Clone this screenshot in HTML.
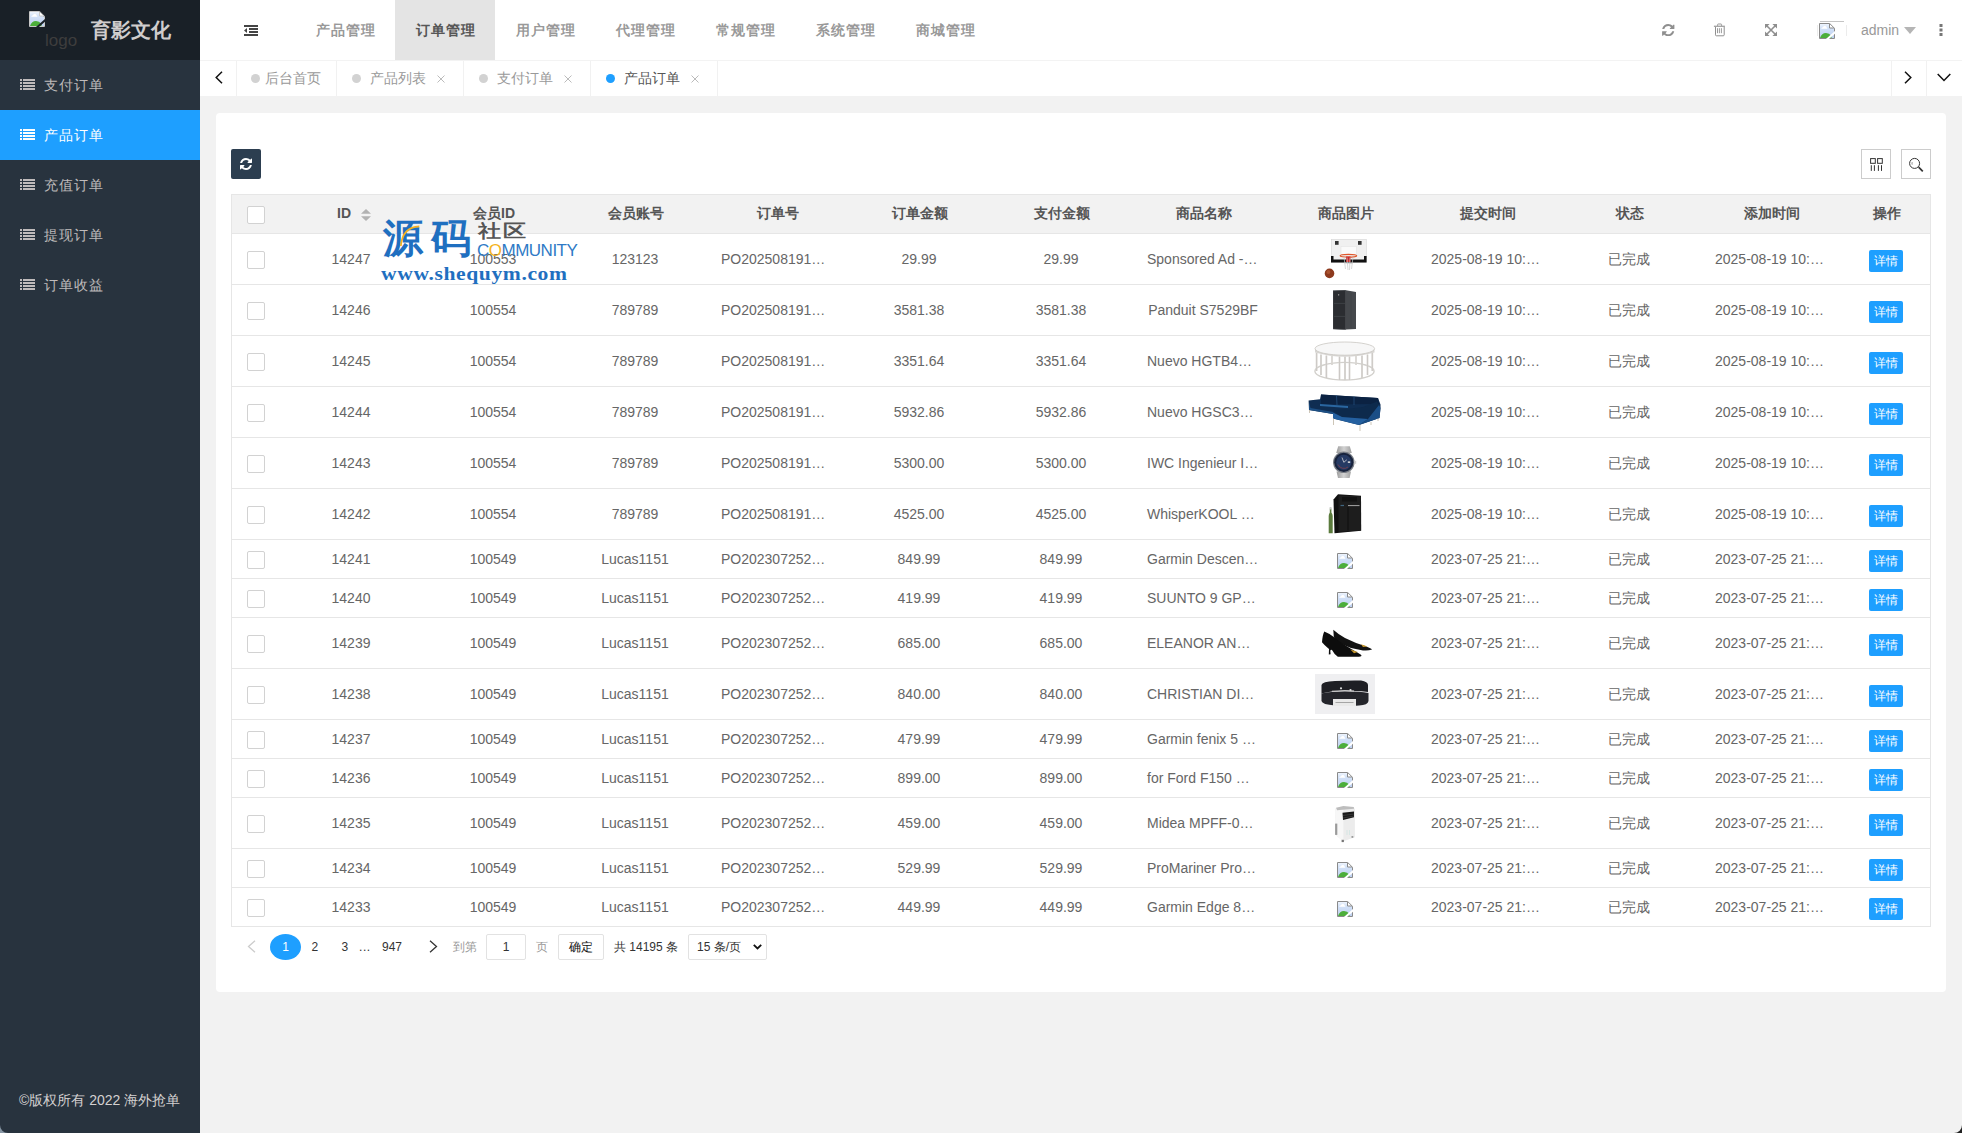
<!DOCTYPE html><html><head><meta charset="utf-8"><style>
*{margin:0;padding:0;box-sizing:border-box}
html,body{width:1962px;height:1133px;overflow:hidden;background:#f2f2f2;font-family:"Liberation Sans",sans-serif;font-size:14px;color:#666}
.a{position:absolute}
#side{left:0;top:0;width:200px;height:1133px;background:#28333e}
#logo{left:0;top:0;width:200px;height:60px;background:#192027}
.mi{left:0;width:200px;height:50px;color:rgb(191,187,187);font-size:14px;line-height:50px}
.mi .ic{position:absolute;left:20px;top:19px;width:15px;height:11px}
.mi span{position:absolute;left:44px;top:0;letter-spacing:1px}
.mi.on{background:#1e9fff;color:#fff}
#hdr{left:200px;top:0;width:1762px;height:60px;background:#fff}
.nv{top:0;width:100px;height:60px;line-height:60px;text-align:center;font-weight:bold;letter-spacing:1px;text-indent:1px;color:rgba(107,107,107,.7);font-size:14px}
.nv.on{background:#e4e4e4;color:#565656}
#tabs{left:200px;top:61px;width:1762px;height:35px;background:#fff}
.tb{top:61px;height:35px;border-right:1px solid #f1f1f1;color:#999;font-size:14px;line-height:35px}
.dot{position:absolute;width:9px;height:9px;border-radius:50%;background:#d2d2d2;top:13px}
.cls{position:absolute;top:14px;width:8px;height:8px}
#card{left:216px;top:113px;width:1730px;height:879px;background:#fff;border-radius:4px}
.th{top:194px;height:38px;line-height:38px;text-align:center;font-weight:bold;color:#555}
.cell{height:20px;line-height:20px;padding:0 15px;white-space:nowrap;overflow:hidden;text-overflow:ellipsis;text-align:center;color:#666}
.cb{position:absolute;left:247px;width:18px;height:18px;border:1px solid #d2d2d2;border-radius:2px;background:#fff}
.hl{left:231px;width:1700px;height:1px;background:#e6e6e6}
.btn{position:absolute;left:1869px;width:34px;height:22px;background:#1e9fff;border-radius:2px;color:#fff;font-size:12px;line-height:22px;text-align:center}
.pg{top:934px;height:26px;line-height:26px;font-size:12px;color:#333}
</style></head><body>
<div id="side" class="a"></div><div id="logo" class="a"></div>
<div class="a" style="left:29px;top:11px"><svg width="16" height="16" viewBox="0 0 16 16"><defs><linearGradient id="sky" x1="0" y1="0" x2="0" y2="1"><stop offset="0" stop-color="#eef4fd"/><stop offset="0.3" stop-color="#d3e2f8"/><stop offset="1" stop-color="#bed0f0"/></linearGradient></defs><path d="M1 1H10.5L15 5.5V15H1z" fill="url(#sky)"/><path d="M2.2 5.8Q2.4 4.3 3.9 4.2Q4.6 2.7 6.2 3Q7.5 3.3 7.6 4.6Q8.4 4.8 8.4 5.8z" fill="#fff"/><path d="M1 15Q2.8 9.8 7 9.9Q10.2 10 12.5 13V15z" fill="#4cae3a"/><path d="M10.5 1V5H15z" fill="#fff"/><path d="M0.5 15.5V0.5H10.7L15.5 5.3V15.5H0.5" fill="none" stroke="#c8c8c8" stroke-width="1"/><path d="M10.5 0.8V5H15.2" fill="none" stroke="#c8c8c8" stroke-width="1"/><path d="M7.4 16.9L16.6 8.8" stroke="#192027" stroke-width="2"/></svg></div>
<div class="a" style="left:45px;top:31px;font-size:17px;line-height:20px;color:#3e3d3d">logo</div>
<div class="a" style="left:91px;top:17px;font-size:20px;line-height:26px;font-weight:bold;color:#d0cdcd">育影文化</div>
<div class="a mi" style="top:60px"><svg class="ic" width="15" height="11" viewBox="0 0 15 11"><rect x="0" y="0" width="2" height="2" fill="currentColor"/><rect x="3" y="0" width="12" height="2" fill="currentColor"/><rect x="0" y="3" width="2" height="2" fill="currentColor"/><rect x="3" y="3" width="12" height="2" fill="currentColor"/><rect x="0" y="6" width="2" height="2" fill="currentColor"/><rect x="3" y="6" width="12" height="2" fill="currentColor"/><rect x="0" y="9" width="2" height="2" fill="currentColor"/><rect x="3" y="9" width="12" height="2" fill="currentColor"/></svg><span>支付订单</span></div>
<div class="a mi on" style="top:110px"><svg class="ic" width="15" height="11" viewBox="0 0 15 11"><rect x="0" y="0" width="2" height="2" fill="currentColor"/><rect x="3" y="0" width="12" height="2" fill="currentColor"/><rect x="0" y="3" width="2" height="2" fill="currentColor"/><rect x="3" y="3" width="12" height="2" fill="currentColor"/><rect x="0" y="6" width="2" height="2" fill="currentColor"/><rect x="3" y="6" width="12" height="2" fill="currentColor"/><rect x="0" y="9" width="2" height="2" fill="currentColor"/><rect x="3" y="9" width="12" height="2" fill="currentColor"/></svg><span>产品订单</span></div>
<div class="a mi" style="top:160px"><svg class="ic" width="15" height="11" viewBox="0 0 15 11"><rect x="0" y="0" width="2" height="2" fill="currentColor"/><rect x="3" y="0" width="12" height="2" fill="currentColor"/><rect x="0" y="3" width="2" height="2" fill="currentColor"/><rect x="3" y="3" width="12" height="2" fill="currentColor"/><rect x="0" y="6" width="2" height="2" fill="currentColor"/><rect x="3" y="6" width="12" height="2" fill="currentColor"/><rect x="0" y="9" width="2" height="2" fill="currentColor"/><rect x="3" y="9" width="12" height="2" fill="currentColor"/></svg><span>充值订单</span></div>
<div class="a mi" style="top:210px"><svg class="ic" width="15" height="11" viewBox="0 0 15 11"><rect x="0" y="0" width="2" height="2" fill="currentColor"/><rect x="3" y="0" width="12" height="2" fill="currentColor"/><rect x="0" y="3" width="2" height="2" fill="currentColor"/><rect x="3" y="3" width="12" height="2" fill="currentColor"/><rect x="0" y="6" width="2" height="2" fill="currentColor"/><rect x="3" y="6" width="12" height="2" fill="currentColor"/><rect x="0" y="9" width="2" height="2" fill="currentColor"/><rect x="3" y="9" width="12" height="2" fill="currentColor"/></svg><span>提现订单</span></div>
<div class="a mi" style="top:260px"><svg class="ic" width="15" height="11" viewBox="0 0 15 11"><rect x="0" y="0" width="2" height="2" fill="currentColor"/><rect x="3" y="0" width="12" height="2" fill="currentColor"/><rect x="0" y="3" width="2" height="2" fill="currentColor"/><rect x="3" y="3" width="12" height="2" fill="currentColor"/><rect x="0" y="6" width="2" height="2" fill="currentColor"/><rect x="3" y="6" width="12" height="2" fill="currentColor"/><rect x="0" y="9" width="2" height="2" fill="currentColor"/><rect x="3" y="9" width="12" height="2" fill="currentColor"/></svg><span>订单收益</span></div>
<div class="a" style="left:19px;top:1090px;font-size:14px;line-height:20px;color:#d4d1d1">©版权所有 2022 海外抢单</div>
<div id="hdr" class="a"></div><div class="a" style="left:200px;top:60px;width:1762px;height:1px;background:#f3f3f3"></div>
<svg class="a" style="left:244px;top:25px" width="14" height="11" viewBox="0 0 14 11"><rect x="0" y="0" width="14" height="2" fill="#444"/><rect x="5" y="3" width="9" height="2" fill="#444"/><rect x="5" y="6" width="9" height="2" fill="#444"/><rect x="0" y="9" width="14" height="2" fill="#444"/><path d="M0 5.5l3-2.5v5z" fill="#444"/></svg>
<div class="a nv" style="left:295px">产品管理</div>
<div class="a nv on" style="left:395px">订单管理</div>
<div class="a nv" style="left:495px">用户管理</div>
<div class="a nv" style="left:595px">代理管理</div>
<div class="a nv" style="left:695px">常规管理</div>
<div class="a nv" style="left:795px">系统管理</div>
<div class="a nv" style="left:895px">商城管理</div>
<svg class="a" style="left:1662px;top:23.8px" width="12.5" height="12.3" viewBox="0 0 1536 1536"><path d="M1511 928q0 5-1 7-64 268-268 434.5T764 1536q-146 0-282.5-55T238 1324l-129 129q-19 19-45 19t-45-19-19-45V960q0-26 19-45t45-19h448q26 0 45 19t19 45-19 45l-137 137q71 66 161 102t187 36q134 0 250-65t186-179q11-17 53-117 8-23 30-23h192q13 0 22.5 9.5t9.5 22.5zm25-800v448q0 26-19 45t-45 19h-448q-26 0-45-19t-19-45 19-45l138-138Q969 256 768 256q-134 0-250 65T332 500q-11 17-53 117-8 23-30 23H50q-13 0-22.5-9.5T18 608v-7q65-268 270-434.5T768 0q146 0 284 55.5T1297 212l130-129q19-19 45-19t45 19 19 45z" fill="#8f8f8f"/></svg>
<svg class="a" style="left:1713px;top:23px" width="13" height="14" viewBox="0 0 13 14"><rect x="0.9" y="2.7" width="11" height="1.1" fill="#8f8f8f"/><path d="M4.6 2.9V1.6Q4.6 1 5.2 1H8Q8.6 1 8.6 1.6V2.9" fill="none" stroke="#8f8f8f" stroke-width="0.9"/><path d="M2.5 3.8V11.8Q2.5 12.8 3.5 12.8H10.2Q11.2 12.8 11.2 11.8V3.8" fill="none" stroke="#8f8f8f" stroke-width="1"/><path d="M4.5 5.2V10.2M6.4 5.2V10.2M8.4 5.2V10.2" stroke="#8f8f8f" stroke-width="0.9"/></svg>
<svg class="a" style="left:1765px;top:24px" width="12" height="12" viewBox="0 0 12 12"><path d="M0 0h4.6L0 4.6zM12 0v4.6L7.4 0zM0 12V7.4L4.6 12zM12 12H7.4L12 7.4z" fill="#8f8f8f"/><path d="M1.5 1.5l9 9M10.5 1.5l-9 9" stroke="#8f8f8f" stroke-width="1.6"/></svg>
<div class="a" style="left:1820px;top:21px;width:24px;height:1px;background:#c4c4c4"></div><div class="a" style="left:1817px;top:25px;width:1px;height:11px;background:#ececec"></div><div class="a" style="left:1846px;top:25px;width:1px;height:11px;background:#ececec"></div>
<div class="a" style="left:1819px;top:23px"><svg width="16" height="16" viewBox="0 0 16 16"><defs><linearGradient id="sky" x1="0" y1="0" x2="0" y2="1"><stop offset="0" stop-color="#eef4fd"/><stop offset="0.3" stop-color="#d3e2f8"/><stop offset="1" stop-color="#bed0f0"/></linearGradient></defs><path d="M1 1H10.5L15 5.5V15H1z" fill="url(#sky)"/><path d="M2.2 5.8Q2.4 4.3 3.9 4.2Q4.6 2.7 6.2 3Q7.5 3.3 7.6 4.6Q8.4 4.8 8.4 5.8z" fill="#fff"/><path d="M1 15Q2.8 9.8 7 9.9Q10.2 10 12.5 13V15z" fill="#4cae3a"/><path d="M10.5 1V5H15z" fill="#fff"/><path d="M0.5 15.5V0.5H10.7L15.5 5.3V15.5H0.5" fill="none" stroke="#8a8a8a" stroke-width="1"/><path d="M10.5 0.8V5H15.2" fill="none" stroke="#8a8a8a" stroke-width="1"/><path d="M7.4 16.9L16.6 8.8" stroke="#fff" stroke-width="2"/></svg></div>
<div class="a" style="left:1861px;top:20px;font-size:14px;line-height:20px;color:#999">admin</div>
<svg class="a" style="left:1904px;top:27px" width="12" height="7" viewBox="0 0 12 7"><path d="M0 0h12l-6 7z" fill="#b5b5b5"/></svg>
<svg class="a" style="left:1939px;top:24px" width="4" height="12" viewBox="0 0 4 12"><rect x="0.5" y="0" width="3" height="3" fill="#777"/><rect x="0.5" y="4.5" width="3" height="3" fill="#777"/><rect x="0.5" y="9" width="3" height="3" fill="#777"/></svg>
<div id="tabs" class="a"></div>
<div class="a" style="left:236px;top:61px;width:1px;height:35px;background:#f1f1f1"></div>
<svg class="a" style="left:215px;top:71px" width="8" height="13" viewBox="0 0 8 13"><path d="M7 0.7L1.2 6.5 7 12.3" fill="none" stroke="#111" stroke-width="1.5"/></svg>
<div class="a tb" style="left:237px;width:100px"><div class="dot" style="left:14px;top:13px"></div><span style="position:absolute;left:28px">后台首页</span></div>
<div class="a tb" style="left:337px;width:127px;"><div class="dot" style="left:15px;"></div><span style="position:absolute;left:33px">产品列表</span><svg class="cls" style="left:100px" viewBox="0 0 8 8"><path d="M0.5 0.5l7 7M7.5 0.5l-7 7" stroke="#bbb" stroke-width="1"/></svg></div>
<div class="a tb" style="left:464px;width:127px;"><div class="dot" style="left:15px;"></div><span style="position:absolute;left:33px">支付订单</span><svg class="cls" style="left:100px" viewBox="0 0 8 8"><path d="M0.5 0.5l7 7M7.5 0.5l-7 7" stroke="#bbb" stroke-width="1"/></svg></div>
<div class="a tb" style="left:591px;width:127px;color:#555"><div class="dot" style="left:15px;background:#1e9fff"></div><span style="position:absolute;left:33px">产品订单</span><svg class="cls" style="left:100px" viewBox="0 0 8 8"><path d="M0.5 0.5l7 7M7.5 0.5l-7 7" stroke="#bbb" stroke-width="1"/></svg></div>
<div class="a" style="left:1891px;top:61px;width:1px;height:35px;background:#f1f1f1"></div>
<div class="a" style="left:1926px;top:61px;width:1px;height:35px;background:#f1f1f1"></div>
<svg class="a" style="left:1904px;top:71px" width="8" height="13" viewBox="0 0 8 13"><path d="M1 0.7L6.8 6.5 1 12.3" fill="none" stroke="#111" stroke-width="1.5"/></svg>
<svg class="a" style="left:1937px;top:73px" width="14" height="9" viewBox="0 0 14 9"><path d="M0.7 1l6.3 6.5L13.3 1" fill="none" stroke="#111" stroke-width="1.5"/></svg>
<div id="card" class="a"></div>
<div class="a" style="left:231px;top:149px;width:30px;height:30px;background:#2c3e50;border-radius:2px"></div>
<svg class="a" style="left:240px;top:158px" width="12" height="12" viewBox="0 0 1536 1536"><path d="M1511 928q0 5-1 7-64 268-268 434.5T764 1536q-146 0-282.5-55T238 1324l-129 129q-19 19-45 19t-45-19-19-45V960q0-26 19-45t45-19h448q26 0 45 19t19 45-19 45l-137 137q71 66 161 102t187 36q134 0 250-65t186-179q11-17 53-117 8-23 30-23h192q13 0 22.5 9.5t9.5 22.5zm25-800v448q0 26-19 45t-45 19h-448q-26 0-45-19t-19-45 19-45l138-138Q969 256 768 256q-134 0-250 65T332 500q-11 17-53 117-8 23-30 23H50q-13 0-22.5-9.5T18 608v-7q65-268 270-434.5T768 0q146 0 284 55.5T1297 212l130-129q19-19 45-19t45 19 19 45z" fill="#fff"/></svg>
<div class="a" style="left:1861px;top:149px;width:30px;height:30px;border:1px solid #ccc"></div>
<svg class="a" style="left:1869px;top:157px" width="16" height="16" viewBox="0 0 16 16"><rect x="1.6" y="1.6" width="4.7" height="4.7" fill="none" stroke="#333" stroke-width="1"/><rect x="8.6" y="1.6" width="4.7" height="4.7" fill="none" stroke="#333" stroke-width="1"/><path d="M2.3 8.2V13.9M5.4 8.2V13.9M9.4 8.2V13.9M12.5 8.2V13.9" stroke="#333" stroke-width="1"/></svg>
<div class="a" style="left:1901px;top:149px;width:30px;height:30px;border:1px solid #ccc"></div>
<svg class="a" style="left:1909px;top:157px" width="16" height="16" viewBox="0 0 16 16"><circle cx="5.6" cy="6.4" r="5" fill="none" stroke="#333" stroke-width="1"/><path d="M3.2 5.2Q2.8 6.3 3.2 7.6" fill="none" stroke="#555" stroke-width="0.7"/><path d="M9.6 10.2L13.8 14.4" stroke="#333" stroke-width="1.7"/></svg>
<div class="a" style="left:231px;top:194px;width:1700px;height:733px;border:1px solid #e6e6e6"></div>
<div class="a" style="left:232px;top:195px;width:1698px;height:38px;background:#f2f2f2"></div>
<div class="a hl" style="top:233px"></div>
<div class="cb" style="top:206px"></div>
<div class="a th" style="left:337px;width:20px;text-align:left">ID</div><svg class="a" style="left:361px;top:209px" width="10" height="12" viewBox="0 0 10 12"><path d="M5 0L10 4.8H0z" fill="#b2b2b2"/><path d="M0 7.2H10L5 12z" fill="#b2b2b2"/></svg>
<div class="a th" style="left:423px;width:142px">会员ID</div>
<div class="a th" style="left:565px;width:142px">会员账号</div>
<div class="a th" style="left:707px;width:142px">订单号</div>
<div class="a th" style="left:849px;width:142px">订单金额</div>
<div class="a th" style="left:991px;width:142px">支付金额</div>
<div class="a th" style="left:1133px;width:142px">商品名称</div>
<div class="a th" style="left:1275px;width:142px">商品图片</div>
<div class="a th" style="left:1417px;width:142px">提交时间</div>
<div class="a th" style="left:1559px;width:142px">状态</div>
<div class="a th" style="left:1701px;width:142px">添加时间</div>
<div class="a th" style="left:1843px;width:88px">操作</div>
<div class="cb" style="top:251px"></div>
<div class="a cell" style="left:280px;top:249px;width:142px">14247</div>
<div class="a cell" style="left:422px;top:249px;width:142px">100553</div>
<div class="a cell" style="left:564px;top:249px;width:142px">123123</div>
<div class="a cell" style="left:706px;top:249px;width:142px">PO2025081910234567</div>
<div class="a cell" style="left:848px;top:249px;width:142px">29.99</div>
<div class="a cell" style="left:990px;top:249px;width:142px">29.99</div>
<div class="a cell" style="left:1132px;top:249px;width:142px">Sponsored Ad - Mini Hoop</div>
<div class="a cell" style="left:1416px;top:249px;width:142px">2025-08-19 10:23:11</div>
<div class="a cell" style="left:1558px;top:249px;width:142px">已完成</div>
<div class="a cell" style="left:1700px;top:249px;width:142px">2025-08-19 10:23:11</div>
<div class="btn" style="top:250px">详情</div>
<div class="a" style="left:1323px;top:239px;height:40px"><svg width="44" height="40" viewBox="0 0 44 40"><rect x="8.3" y="0.3" width="35" height="23" fill="#f0f0f0" stroke="#d6d6d6" stroke-width="0.6"/><rect x="12" y="2" width="3.6" height="3.8" fill="#333"/><rect x="35" y="2" width="3.6" height="3.8" fill="#333"/><path d="M8 17H10.5V20.5H41V17H43.6V23.4H8z" fill="#111"/><rect x="18" y="7.6" width="15.3" height="9" fill="#fafafa" stroke="#e2e2e2" stroke-width="0.5"/><ellipse cx="25.4" cy="16.7" rx="8.3" ry="1.4" fill="none" stroke="#e0562a" stroke-width="1.2"/><rect x="23" y="17.5" width="4.5" height="5.5" fill="#cc2a2a"/><path d="M21 18L22.5 30M24 18.5L25 31M27 18.5L26.5 31M30 18L28.5 30M21.5 24L29.5 24.5" stroke="#c8c8c8" stroke-width="0.7" fill="none"/><circle cx="6.5" cy="34.4" r="4.8" fill="#8d3a1e"/><circle cx="5.4" cy="33" r="2" fill="#a9522f"/></svg></div>
<div class="a hl" style="top:284px"></div>
<div class="cb" style="top:302px"></div>
<div class="a cell" style="left:280px;top:300px;width:142px">14246</div>
<div class="a cell" style="left:422px;top:300px;width:142px">100554</div>
<div class="a cell" style="left:564px;top:300px;width:142px">789789</div>
<div class="a cell" style="left:706px;top:300px;width:142px">PO2025081910234568</div>
<div class="a cell" style="left:848px;top:300px;width:142px">3581.38</div>
<div class="a cell" style="left:990px;top:300px;width:142px">3581.38</div>
<div class="a cell" style="left:1132px;top:300px;width:142px">Panduit S7529BF</div>
<div class="a cell" style="left:1416px;top:300px;width:142px">2025-08-19 10:23:11</div>
<div class="a cell" style="left:1558px;top:300px;width:142px">已完成</div>
<div class="a cell" style="left:1700px;top:300px;width:142px">2025-08-19 10:23:11</div>
<div class="btn" style="top:301px">详情</div>
<div class="a" style="left:1333px;top:290px;height:40px"><svg width="24" height="40" viewBox="0 0 24 40"><path d="M0 0.8L13 0.3L23 2V39L13 39.6L0 39z" fill="#45484c"/><path d="M0 0.8L12.6 0.3V39.6L0 39z" fill="#2b2d31" stroke="#55585c" stroke-width="0.5"/><path d="M1 13.4H12M1 26.4H12" stroke="#4a4d52" stroke-width="0.6"/><rect x="5" y="4" width="1.2" height="1.6" fill="#888"/><path d="M18 2.5V38.5" stroke="#3a3d41" stroke-width="0.5"/></svg></div>
<div class="a hl" style="top:335px"></div>
<div class="cb" style="top:353px"></div>
<div class="a cell" style="left:280px;top:351px;width:142px">14245</div>
<div class="a cell" style="left:422px;top:351px;width:142px">100554</div>
<div class="a cell" style="left:564px;top:351px;width:142px">789789</div>
<div class="a cell" style="left:706px;top:351px;width:142px">PO2025081910234569</div>
<div class="a cell" style="left:848px;top:351px;width:142px">3351.64</div>
<div class="a cell" style="left:990px;top:351px;width:142px">3351.64</div>
<div class="a cell" style="left:1132px;top:351px;width:142px">Nuevo HGTB4XXXXX</div>
<div class="a cell" style="left:1416px;top:351px;width:142px">2025-08-19 10:23:11</div>
<div class="a cell" style="left:1558px;top:351px;width:142px">已完成</div>
<div class="a cell" style="left:1700px;top:351px;width:142px">2025-08-19 10:23:11</div>
<div class="btn" style="top:352px">详情</div>
<div class="a" style="left:1314px;top:341px;height:40px"><svg width="62" height="40" viewBox="0 0 62 40"><ellipse cx="30.5" cy="30.2" rx="29.6" ry="8.8" fill="none" stroke="#d2d0cc" stroke-width="1.4"/><path d="M2.6 12V30M7 13.5V34M12.4 14.5V37M25.5 15.5V39M31 15.5V39M35.5 15.5V39M48 14.5V37M53.5 13.5V34M58.3 12V30M18 15V24M42 15V24" stroke="#d9d6d2" stroke-width="1.8"/><path d="M2.6 12V30M7 13.5V34M12.4 14.5V37M25.5 15.5V39M31 15.5V39M35.5 15.5V39M48 14.5V37M53.5 13.5V34M58.3 12V30" stroke="#b9b6b2" stroke-width="0.4"/><path d="M1 8V11.5Q30.5 20 60.5 11.5V8z" fill="#d8d6d3"/><ellipse cx="30.8" cy="7.6" rx="29.8" ry="6.6" fill="#f7f7f7" stroke="#c9c6c2" stroke-width="0.8"/></svg></div>
<div class="a hl" style="top:386px"></div>
<div class="cb" style="top:404px"></div>
<div class="a cell" style="left:280px;top:402px;width:142px">14244</div>
<div class="a cell" style="left:422px;top:402px;width:142px">100554</div>
<div class="a cell" style="left:564px;top:402px;width:142px">789789</div>
<div class="a cell" style="left:706px;top:402px;width:142px">PO2025081910234570</div>
<div class="a cell" style="left:848px;top:402px;width:142px">5932.86</div>
<div class="a cell" style="left:990px;top:402px;width:142px">5932.86</div>
<div class="a cell" style="left:1132px;top:402px;width:142px">Nuevo HGSC3XXXXX</div>
<div class="a cell" style="left:1416px;top:402px;width:142px">2025-08-19 10:23:11</div>
<div class="a cell" style="left:1558px;top:402px;width:142px">已完成</div>
<div class="a cell" style="left:1700px;top:402px;width:142px">2025-08-19 10:23:11</div>
<div class="btn" style="top:403px">详情</div>
<div class="a" style="left:1308px;top:393px;height:38px"><svg width="73" height="38" viewBox="0 0 73 38"><path d="M0.6 7.5L12 6.2L13 1.5L45 3.5L70 5L72.5 11.5L72.5 15L71.5 25L51 32L25 25.5L25 21L1 17z" fill="#0f2d52"/><path d="M13 1.5L45 3.5L70 5L71 11L13 11.5z" fill="#0b2242"/><path d="M28.5 2.5L29 12M46 3.6L46 12" stroke="#2a5c8e" stroke-width="0.6"/><path d="M12 11L40 13L40 15L12 13z" fill="#2a66a0"/><path d="M1 9V17L25 21V19L2.5 15z" fill="#1d4f84"/><path d="M25 17.5L55 14L69 8.5L71 12L60 26L34 24z" fill="#0d2a4c"/><path d="M25 19.5L34 24L60 26L51 32L25 25.5z" fill="#2460a0"/><path d="M60 26L71 12L72.5 15L71.5 25L51 32z" fill="#1a4e86"/><path d="M1.5 17V20M25.5 25.5V32M52 32V38M63 29V32M70 25.5V28" stroke="#c7c0b0" stroke-width="0.9"/></svg></div>
<div class="a hl" style="top:437px"></div>
<div class="cb" style="top:455px"></div>
<div class="a cell" style="left:280px;top:453px;width:142px">14243</div>
<div class="a cell" style="left:422px;top:453px;width:142px">100554</div>
<div class="a cell" style="left:564px;top:453px;width:142px">789789</div>
<div class="a cell" style="left:706px;top:453px;width:142px">PO2025081910234571</div>
<div class="a cell" style="left:848px;top:453px;width:142px">5300.00</div>
<div class="a cell" style="left:990px;top:453px;width:142px">5300.00</div>
<div class="a cell" style="left:1132px;top:453px;width:142px">IWC Ingenieur IW328903</div>
<div class="a cell" style="left:1416px;top:453px;width:142px">2025-08-19 10:23:11</div>
<div class="a cell" style="left:1558px;top:453px;width:142px">已完成</div>
<div class="a cell" style="left:1700px;top:453px;width:142px">2025-08-19 10:23:11</div>
<div class="btn" style="top:454px">详情</div>
<div class="a" style="left:1333px;top:446px;height:34px"><svg width="24" height="34" viewBox="0 0 24 34"><defs><linearGradient id="strap" x1="0" y1="0" x2="1" y2="0"><stop offset="0" stop-color="#9c9c9c"/><stop offset="0.5" stop-color="#d2d2d2"/><stop offset="1" stop-color="#a0a0a0"/></linearGradient></defs><path d="M5.2 0.3H16.8L18.8 7H3.2z" fill="url(#strap)"/><path d="M3.5 25.5H18L16.6 32H5z" fill="url(#strap)"/><circle cx="10.8" cy="16.3" r="10.8" fill="#7c8088"/><circle cx="10.8" cy="16.3" r="9.6" fill="#18233d"/><circle cx="10.8" cy="16.3" r="7.6" fill="#263a63"/><path d="M10.8 16.3L13.8 13.8M10.8 16.3L9 11.5" stroke="#e6e6e6" stroke-width="0.7"/><path d="M5 18.5A6.5 6.5 0 0 0 15 21" fill="none" stroke="#a04040" stroke-width="0.6"/><rect x="14.8" y="15.4" width="2.4" height="1.5" fill="#ddd"/><rect x="21.2" y="14.8" width="2" height="3" fill="#cfcfcf"/></svg></div>
<div class="a hl" style="top:488px"></div>
<div class="cb" style="top:506px"></div>
<div class="a cell" style="left:280px;top:504px;width:142px">14242</div>
<div class="a cell" style="left:422px;top:504px;width:142px">100554</div>
<div class="a cell" style="left:564px;top:504px;width:142px">789789</div>
<div class="a cell" style="left:706px;top:504px;width:142px">PO2025081910234572</div>
<div class="a cell" style="left:848px;top:504px;width:142px">4525.00</div>
<div class="a cell" style="left:990px;top:504px;width:142px">4525.00</div>
<div class="a cell" style="left:1132px;top:504px;width:142px">WhisperKOOL Platinum</div>
<div class="a cell" style="left:1416px;top:504px;width:142px">2025-08-19 10:23:11</div>
<div class="a cell" style="left:1558px;top:504px;width:142px">已完成</div>
<div class="a cell" style="left:1700px;top:504px;width:142px">2025-08-19 10:23:11</div>
<div class="btn" style="top:505px">详情</div>
<div class="a" style="left:1328px;top:494px;height:40px"><svg width="34" height="40" viewBox="0 0 34 40"><path d="M5.5 5.5L10 0.3L33 1.8L33.2 36.8L6.5 39.3z" fill="#101010"/><path d="M10.5 1.2L32.8 2.2V36.6L10.5 37.8z" fill="#1d1d1d"/><rect x="14" y="3" width="15" height="4.5" fill="#121212"/><path d="M12.5 11.5H16" stroke="#3f6580" stroke-width="1.2"/><path d="M20 11.6H31.5" stroke="#c8c8c8" stroke-width="0.8"/><path d="M20 13V36.5" stroke="#0b0b0b" stroke-width="0.8"/><path d="M1.8 14.5H3.4V18.5Q4.7 20 4.7 22V39.3H0.7V22Q0.7 20 1.8 18.5z" fill="#5b7b3d"/><rect x="1.6" y="13" width="1.9" height="2.5" fill="#ccc"/></svg></div>
<div class="a hl" style="top:539px"></div>
<div class="cb" style="top:551px"></div>
<div class="a cell" style="left:280px;top:549px;width:142px">14241</div>
<div class="a cell" style="left:422px;top:549px;width:142px">100549</div>
<div class="a cell" style="left:564px;top:549px;width:142px">Lucas1151</div>
<div class="a cell" style="left:706px;top:549px;width:142px">PO2023072521234567</div>
<div class="a cell" style="left:848px;top:549px;width:142px">849.99</div>
<div class="a cell" style="left:990px;top:549px;width:142px">849.99</div>
<div class="a cell" style="left:1132px;top:549px;width:142px">Garmin Descent Mk2</div>
<div class="a cell" style="left:1416px;top:549px;width:142px">2023-07-25 21:23:11</div>
<div class="a cell" style="left:1558px;top:549px;width:142px">已完成</div>
<div class="a cell" style="left:1700px;top:549px;width:142px">2023-07-25 21:23:11</div>
<div class="btn" style="top:550px">详情</div>
<div class="a" style="left:1337px;top:553px;height:16px"><svg width="16" height="16" viewBox="0 0 16 16"><defs><linearGradient id="sky" x1="0" y1="0" x2="0" y2="1"><stop offset="0" stop-color="#eef4fd"/><stop offset="0.3" stop-color="#d3e2f8"/><stop offset="1" stop-color="#bed0f0"/></linearGradient></defs><path d="M1 1H10.5L15 5.5V15H1z" fill="url(#sky)"/><path d="M2.2 5.8Q2.4 4.3 3.9 4.2Q4.6 2.7 6.2 3Q7.5 3.3 7.6 4.6Q8.4 4.8 8.4 5.8z" fill="#fff"/><path d="M1 15Q2.8 9.8 7 9.9Q10.2 10 12.5 13V15z" fill="#4cae3a"/><path d="M10.5 1V5H15z" fill="#fff"/><path d="M0.5 15.5V0.5H10.7L15.5 5.3V15.5H0.5" fill="none" stroke="#8a8a8a" stroke-width="1"/><path d="M10.5 0.8V5H15.2" fill="none" stroke="#8a8a8a" stroke-width="1"/><path d="M7.4 16.9L16.6 8.8" stroke="#fff" stroke-width="2"/></svg></div>
<div class="a hl" style="top:578px"></div>
<div class="cb" style="top:590px"></div>
<div class="a cell" style="left:280px;top:588px;width:142px">14240</div>
<div class="a cell" style="left:422px;top:588px;width:142px">100549</div>
<div class="a cell" style="left:564px;top:588px;width:142px">Lucas1151</div>
<div class="a cell" style="left:706px;top:588px;width:142px">PO2023072521234568</div>
<div class="a cell" style="left:848px;top:588px;width:142px">419.99</div>
<div class="a cell" style="left:990px;top:588px;width:142px">419.99</div>
<div class="a cell" style="left:1132px;top:588px;width:142px">SUUNTO 9 GPS Watch</div>
<div class="a cell" style="left:1416px;top:588px;width:142px">2023-07-25 21:23:11</div>
<div class="a cell" style="left:1558px;top:588px;width:142px">已完成</div>
<div class="a cell" style="left:1700px;top:588px;width:142px">2023-07-25 21:23:11</div>
<div class="btn" style="top:589px">详情</div>
<div class="a" style="left:1337px;top:592px;height:16px"><svg width="16" height="16" viewBox="0 0 16 16"><defs><linearGradient id="sky" x1="0" y1="0" x2="0" y2="1"><stop offset="0" stop-color="#eef4fd"/><stop offset="0.3" stop-color="#d3e2f8"/><stop offset="1" stop-color="#bed0f0"/></linearGradient></defs><path d="M1 1H10.5L15 5.5V15H1z" fill="url(#sky)"/><path d="M2.2 5.8Q2.4 4.3 3.9 4.2Q4.6 2.7 6.2 3Q7.5 3.3 7.6 4.6Q8.4 4.8 8.4 5.8z" fill="#fff"/><path d="M1 15Q2.8 9.8 7 9.9Q10.2 10 12.5 13V15z" fill="#4cae3a"/><path d="M10.5 1V5H15z" fill="#fff"/><path d="M0.5 15.5V0.5H10.7L15.5 5.3V15.5H0.5" fill="none" stroke="#8a8a8a" stroke-width="1"/><path d="M10.5 0.8V5H15.2" fill="none" stroke="#8a8a8a" stroke-width="1"/><path d="M7.4 16.9L16.6 8.8" stroke="#fff" stroke-width="2"/></svg></div>
<div class="a hl" style="top:617px"></div>
<div class="cb" style="top:635px"></div>
<div class="a cell" style="left:280px;top:633px;width:142px">14239</div>
<div class="a cell" style="left:422px;top:633px;width:142px">100549</div>
<div class="a cell" style="left:564px;top:633px;width:142px">Lucas1151</div>
<div class="a cell" style="left:706px;top:633px;width:142px">PO2023072521234569</div>
<div class="a cell" style="left:848px;top:633px;width:142px">685.00</div>
<div class="a cell" style="left:990px;top:633px;width:142px">685.00</div>
<div class="a cell" style="left:1132px;top:633px;width:142px">ELEANOR ANKLE PUMP</div>
<div class="a cell" style="left:1416px;top:633px;width:142px">2023-07-25 21:23:11</div>
<div class="a cell" style="left:1558px;top:633px;width:142px">已完成</div>
<div class="a cell" style="left:1700px;top:633px;width:142px">2023-07-25 21:23:11</div>
<div class="btn" style="top:634px">详情</div>
<div class="a" style="left:1321px;top:629px;height:30px"><svg width="52" height="30" viewBox="0 0 52 30"><path d="M12.3 0.7Q17 5 24 9Q34 14 44 17Q51 19.5 51 20.5Q47 22 42 21.4Q36 20.5 30 19Q23 16.5 18 13.5Q14 11 12.8 8z" fill="#121212"/><path d="M3.3 2.5Q8 4.5 11.4 7Q20 14 29.5 19.6Q37 24 40.3 26Q41 27.7 38 27.7H16.8Q13 25 11 21Q9.5 20 9.3 22L9.6 25.2L7.8 25.5L8 20Q3 16 1 13.3Q1.5 6 3.3 2.5z" fill="#0d0d0d"/><path d="M29.5 20.5L36.7 23L33 24.3z" fill="#c99a2e"/><path d="M40 15.2L46.6 17.4L42 18z" fill="#c99a2e"/></svg></div>
<div class="a hl" style="top:668px"></div>
<div class="cb" style="top:686px"></div>
<div class="a cell" style="left:280px;top:684px;width:142px">14238</div>
<div class="a cell" style="left:422px;top:684px;width:142px">100549</div>
<div class="a cell" style="left:564px;top:684px;width:142px">Lucas1151</div>
<div class="a cell" style="left:706px;top:684px;width:142px">PO2023072521234570</div>
<div class="a cell" style="left:848px;top:684px;width:142px">840.00</div>
<div class="a cell" style="left:990px;top:684px;width:142px">840.00</div>
<div class="a cell" style="left:1132px;top:684px;width:142px">CHRISTIAN DIOR BELT</div>
<div class="a cell" style="left:1416px;top:684px;width:142px">2023-07-25 21:23:11</div>
<div class="a cell" style="left:1558px;top:684px;width:142px">已完成</div>
<div class="a cell" style="left:1700px;top:684px;width:142px">2023-07-25 21:23:11</div>
<div class="btn" style="top:685px">详情</div>
<div class="a" style="left:1315px;top:674px;height:40px"><svg width="60" height="40" viewBox="0 0 60 40"><rect width="60" height="40" fill="#efeff1"/><path d="M6.5 11Q7 7.5 20 7Q35 6.2 46 6.5Q53 7.5 53 11V18Q40 16.5 30 16.5Q15 17 6.5 19.5z" fill="#1e1f24"/><path d="M6.5 19.5Q15 17.5 30 17.3Q45 17.3 53.5 19V27Q53 31 44 31.5Q32 32.5 20 31.5Q7 30.5 6.5 27z" fill="#24252b"/><path d="M17 17.2Q28 16.4 39 17" stroke="#dcdcdc" stroke-width="1.1" fill="none"/><rect x="18" y="25" width="23" height="7" fill="#e9e9e9"/><path d="M20.5 28.5H38.5" stroke="#777" stroke-width="0.6"/><circle cx="26" cy="14.3" r="1.1" fill="#ddd"/><circle cx="35.5" cy="16" r="1.1" fill="#ddd"/></svg></div>
<div class="a hl" style="top:719px"></div>
<div class="cb" style="top:731px"></div>
<div class="a cell" style="left:280px;top:729px;width:142px">14237</div>
<div class="a cell" style="left:422px;top:729px;width:142px">100549</div>
<div class="a cell" style="left:564px;top:729px;width:142px">Lucas1151</div>
<div class="a cell" style="left:706px;top:729px;width:142px">PO2023072521234571</div>
<div class="a cell" style="left:848px;top:729px;width:142px">479.99</div>
<div class="a cell" style="left:990px;top:729px;width:142px">479.99</div>
<div class="a cell" style="left:1132px;top:729px;width:142px">Garmin fenix 5 Plus</div>
<div class="a cell" style="left:1416px;top:729px;width:142px">2023-07-25 21:23:11</div>
<div class="a cell" style="left:1558px;top:729px;width:142px">已完成</div>
<div class="a cell" style="left:1700px;top:729px;width:142px">2023-07-25 21:23:11</div>
<div class="btn" style="top:730px">详情</div>
<div class="a" style="left:1337px;top:733px;height:16px"><svg width="16" height="16" viewBox="0 0 16 16"><defs><linearGradient id="sky" x1="0" y1="0" x2="0" y2="1"><stop offset="0" stop-color="#eef4fd"/><stop offset="0.3" stop-color="#d3e2f8"/><stop offset="1" stop-color="#bed0f0"/></linearGradient></defs><path d="M1 1H10.5L15 5.5V15H1z" fill="url(#sky)"/><path d="M2.2 5.8Q2.4 4.3 3.9 4.2Q4.6 2.7 6.2 3Q7.5 3.3 7.6 4.6Q8.4 4.8 8.4 5.8z" fill="#fff"/><path d="M1 15Q2.8 9.8 7 9.9Q10.2 10 12.5 13V15z" fill="#4cae3a"/><path d="M10.5 1V5H15z" fill="#fff"/><path d="M0.5 15.5V0.5H10.7L15.5 5.3V15.5H0.5" fill="none" stroke="#8a8a8a" stroke-width="1"/><path d="M10.5 0.8V5H15.2" fill="none" stroke="#8a8a8a" stroke-width="1"/><path d="M7.4 16.9L16.6 8.8" stroke="#fff" stroke-width="2"/></svg></div>
<div class="a hl" style="top:758px"></div>
<div class="cb" style="top:770px"></div>
<div class="a cell" style="left:280px;top:768px;width:142px">14236</div>
<div class="a cell" style="left:422px;top:768px;width:142px">100549</div>
<div class="a cell" style="left:564px;top:768px;width:142px">Lucas1151</div>
<div class="a cell" style="left:706px;top:768px;width:142px">PO2023072521234572</div>
<div class="a cell" style="left:848px;top:768px;width:142px">899.00</div>
<div class="a cell" style="left:990px;top:768px;width:142px">899.00</div>
<div class="a cell" style="left:1132px;top:768px;width:142px">for Ford F150 Raptor</div>
<div class="a cell" style="left:1416px;top:768px;width:142px">2023-07-25 21:23:11</div>
<div class="a cell" style="left:1558px;top:768px;width:142px">已完成</div>
<div class="a cell" style="left:1700px;top:768px;width:142px">2023-07-25 21:23:11</div>
<div class="btn" style="top:769px">详情</div>
<div class="a" style="left:1337px;top:772px;height:16px"><svg width="16" height="16" viewBox="0 0 16 16"><defs><linearGradient id="sky" x1="0" y1="0" x2="0" y2="1"><stop offset="0" stop-color="#eef4fd"/><stop offset="0.3" stop-color="#d3e2f8"/><stop offset="1" stop-color="#bed0f0"/></linearGradient></defs><path d="M1 1H10.5L15 5.5V15H1z" fill="url(#sky)"/><path d="M2.2 5.8Q2.4 4.3 3.9 4.2Q4.6 2.7 6.2 3Q7.5 3.3 7.6 4.6Q8.4 4.8 8.4 5.8z" fill="#fff"/><path d="M1 15Q2.8 9.8 7 9.9Q10.2 10 12.5 13V15z" fill="#4cae3a"/><path d="M10.5 1V5H15z" fill="#fff"/><path d="M0.5 15.5V0.5H10.7L15.5 5.3V15.5H0.5" fill="none" stroke="#8a8a8a" stroke-width="1"/><path d="M10.5 0.8V5H15.2" fill="none" stroke="#8a8a8a" stroke-width="1"/><path d="M7.4 16.9L16.6 8.8" stroke="#fff" stroke-width="2"/></svg></div>
<div class="a hl" style="top:797px"></div>
<div class="cb" style="top:815px"></div>
<div class="a cell" style="left:280px;top:813px;width:142px">14235</div>
<div class="a cell" style="left:422px;top:813px;width:142px">100549</div>
<div class="a cell" style="left:564px;top:813px;width:142px">Lucas1151</div>
<div class="a cell" style="left:706px;top:813px;width:142px">PO2023072521234573</div>
<div class="a cell" style="left:848px;top:813px;width:142px">459.00</div>
<div class="a cell" style="left:990px;top:813px;width:142px">459.00</div>
<div class="a cell" style="left:1132px;top:813px;width:142px">Midea MPFF-08CRN1</div>
<div class="a cell" style="left:1416px;top:813px;width:142px">2023-07-25 21:23:11</div>
<div class="a cell" style="left:1558px;top:813px;width:142px">已完成</div>
<div class="a cell" style="left:1700px;top:813px;width:142px">2023-07-25 21:23:11</div>
<div class="btn" style="top:814px">详情</div>
<div class="a" style="left:1334px;top:805px;height:38px"><svg width="22" height="38" viewBox="0 0 22 38"><path d="M1.3 3.4L20.9 3.8V32.2L9.4 36.2L1.75 30.35z" fill="#ececec"/><path d="M1.3 3.4L9.4 4.5V36.2L1.75 30.35z" fill="#f7f7f7"/><path d="M2 2.7L9.4 0.9L19.75 2L20.2 3.8L3.1 5.15z" fill="#bdbdbd"/><path d="M8.5 7.85L20 6.5V12.35L9 15z" fill="#1a1a1a"/><path d="M9 10.5L20 9M9 13L20 11" stroke="#555" stroke-width="0.5"/><rect x="1.1" y="18.6" width="2.2" height="11.3" fill="#9a9a9a"/><path d="M13 25V30M15.5 25V30" stroke="#cfe5e2" stroke-width="0.7"/><rect x="7.6" y="34.8" width="2.3" height="2.3" fill="#777"/><rect x="17.5" y="31.2" width="1.8" height="1.5" fill="#888"/></svg></div>
<div class="a hl" style="top:848px"></div>
<div class="cb" style="top:860px"></div>
<div class="a cell" style="left:280px;top:858px;width:142px">14234</div>
<div class="a cell" style="left:422px;top:858px;width:142px">100549</div>
<div class="a cell" style="left:564px;top:858px;width:142px">Lucas1151</div>
<div class="a cell" style="left:706px;top:858px;width:142px">PO2023072521234574</div>
<div class="a cell" style="left:848px;top:858px;width:142px">529.99</div>
<div class="a cell" style="left:990px;top:858px;width:142px">529.99</div>
<div class="a cell" style="left:1132px;top:858px;width:142px">ProMariner ProSport</div>
<div class="a cell" style="left:1416px;top:858px;width:142px">2023-07-25 21:23:11</div>
<div class="a cell" style="left:1558px;top:858px;width:142px">已完成</div>
<div class="a cell" style="left:1700px;top:858px;width:142px">2023-07-25 21:23:11</div>
<div class="btn" style="top:859px">详情</div>
<div class="a" style="left:1337px;top:862px;height:16px"><svg width="16" height="16" viewBox="0 0 16 16"><defs><linearGradient id="sky" x1="0" y1="0" x2="0" y2="1"><stop offset="0" stop-color="#eef4fd"/><stop offset="0.3" stop-color="#d3e2f8"/><stop offset="1" stop-color="#bed0f0"/></linearGradient></defs><path d="M1 1H10.5L15 5.5V15H1z" fill="url(#sky)"/><path d="M2.2 5.8Q2.4 4.3 3.9 4.2Q4.6 2.7 6.2 3Q7.5 3.3 7.6 4.6Q8.4 4.8 8.4 5.8z" fill="#fff"/><path d="M1 15Q2.8 9.8 7 9.9Q10.2 10 12.5 13V15z" fill="#4cae3a"/><path d="M10.5 1V5H15z" fill="#fff"/><path d="M0.5 15.5V0.5H10.7L15.5 5.3V15.5H0.5" fill="none" stroke="#8a8a8a" stroke-width="1"/><path d="M10.5 0.8V5H15.2" fill="none" stroke="#8a8a8a" stroke-width="1"/><path d="M7.4 16.9L16.6 8.8" stroke="#fff" stroke-width="2"/></svg></div>
<div class="a hl" style="top:887px"></div>
<div class="cb" style="top:899px"></div>
<div class="a cell" style="left:280px;top:897px;width:142px">14233</div>
<div class="a cell" style="left:422px;top:897px;width:142px">100549</div>
<div class="a cell" style="left:564px;top:897px;width:142px">Lucas1151</div>
<div class="a cell" style="left:706px;top:897px;width:142px">PO2023072521234575</div>
<div class="a cell" style="left:848px;top:897px;width:142px">449.99</div>
<div class="a cell" style="left:990px;top:897px;width:142px">449.99</div>
<div class="a cell" style="left:1132px;top:897px;width:142px">Garmin Edge 830 Bundle</div>
<div class="a cell" style="left:1416px;top:897px;width:142px">2023-07-25 21:23:11</div>
<div class="a cell" style="left:1558px;top:897px;width:142px">已完成</div>
<div class="a cell" style="left:1700px;top:897px;width:142px">2023-07-25 21:23:11</div>
<div class="btn" style="top:898px">详情</div>
<div class="a" style="left:1337px;top:901px;height:16px"><svg width="16" height="16" viewBox="0 0 16 16"><defs><linearGradient id="sky" x1="0" y1="0" x2="0" y2="1"><stop offset="0" stop-color="#eef4fd"/><stop offset="0.3" stop-color="#d3e2f8"/><stop offset="1" stop-color="#bed0f0"/></linearGradient></defs><path d="M1 1H10.5L15 5.5V15H1z" fill="url(#sky)"/><path d="M2.2 5.8Q2.4 4.3 3.9 4.2Q4.6 2.7 6.2 3Q7.5 3.3 7.6 4.6Q8.4 4.8 8.4 5.8z" fill="#fff"/><path d="M1 15Q2.8 9.8 7 9.9Q10.2 10 12.5 13V15z" fill="#4cae3a"/><path d="M10.5 1V5H15z" fill="#fff"/><path d="M0.5 15.5V0.5H10.7L15.5 5.3V15.5H0.5" fill="none" stroke="#8a8a8a" stroke-width="1"/><path d="M10.5 0.8V5H15.2" fill="none" stroke="#8a8a8a" stroke-width="1"/><path d="M7.4 16.9L16.6 8.8" stroke="#fff" stroke-width="2"/></svg></div>
<div class="a" style="left:383px;top:214px;font-size:40px;line-height:48px;font-weight:bold;color:#1f6fc0;letter-spacing:8px">源码</div>
<svg class="a" style="left:398px;top:224px" width="34" height="26" viewBox="0 0 34 26"><path d="M2.8 22 Q4.5 3 21.3 2.3" fill="none" stroke="#f5b323" stroke-width="1.8"/></svg>
<div class="a" style="left:478px;top:218px;font-size:23px;line-height:26px;font-weight:bold;color:#555;letter-spacing:2px;transform:scaleY(0.78);transform-origin:0 50%">社区</div>
<div class="a" style="left:477px;top:240.5px;font-size:17px;line-height:20px;color:#2f7ac6;letter-spacing:-0.5px">C<span style="color:#f5b323">O</span>MMUNITY</div>
<div class="a" style="left:381px;top:262px;font-family:'Liberation Serif',serif;font-size:18px;line-height:24px;font-weight:bold;color:#1f6fc0;letter-spacing:0.5px;transform:scaleX(1.2);transform-origin:0 50%">www.shequym.com</div>
<svg class="a" style="left:247px;top:940px" width="9" height="13" viewBox="0 0 9 13"><path d="M8 0.7L1.5 6.5 8 12.3" fill="none" stroke="#ccc" stroke-width="1.3"/></svg>
<div class="a" style="left:270px;top:934px;width:31px;height:26px;border-radius:50%;background:#1e9fff;color:#fff;font-size:12px;line-height:26px;text-align:center">1</div>
<div class="a pg" style="left:311.5px">2</div>
<div class="a pg" style="left:341.5px">3</div>
<div class="a pg" style="left:359px;letter-spacing:0.6px">...</div>
<div class="a pg" style="left:382px">947</div>
<svg class="a" style="left:428.5px;top:940px" width="9" height="13" viewBox="0 0 9 13"><path d="M1 0.7L7.5 6.5 1 12.3" fill="none" stroke="#333" stroke-width="1.3"/></svg>
<div class="a pg" style="left:453px;color:#999">到第</div>
<div class="a" style="left:486px;top:934px;width:40px;height:26px;border:1px solid #e2e2e2;border-radius:2px;font-size:12px;line-height:24px;text-align:center;color:#333">1</div>
<div class="a pg" style="left:536px;color:#999">页</div>
<div class="a" style="left:558px;top:934px;width:46px;height:26px;border:1px solid #e2e2e2;border-radius:2px;font-size:12px;line-height:24px;text-align:center;color:#111">确定</div>
<div class="a pg" style="left:614px">共 14195 条</div>
<div class="a" style="left:688px;top:934px;width:79px;height:26px;border:1px solid #e2e2e2;border-radius:2px;font-size:12px;line-height:24px;color:#333;padding-left:8px">15 条/页</div>
<svg class="a" style="left:753px;top:944px" width="9" height="6" viewBox="0 0 9 6"><path d="M0.8 0.8l3.7 3.7 3.7-3.7" fill="none" stroke="#111" stroke-width="1.8"/></svg>
<svg class="a" style="left:1954px;top:1125px" width="8" height="8" viewBox="0 0 8 8"><path d="M8 0V8H0A8 8 0 0 0 8 0z" fill="#222"/></svg>
<svg class="a" style="left:0;top:1125px" width="8" height="8" viewBox="0 0 8 8"><path d="M0 0V8H8A8 8 0 0 1 0 0z" fill="#8796a4"/></svg>
</body></html>
